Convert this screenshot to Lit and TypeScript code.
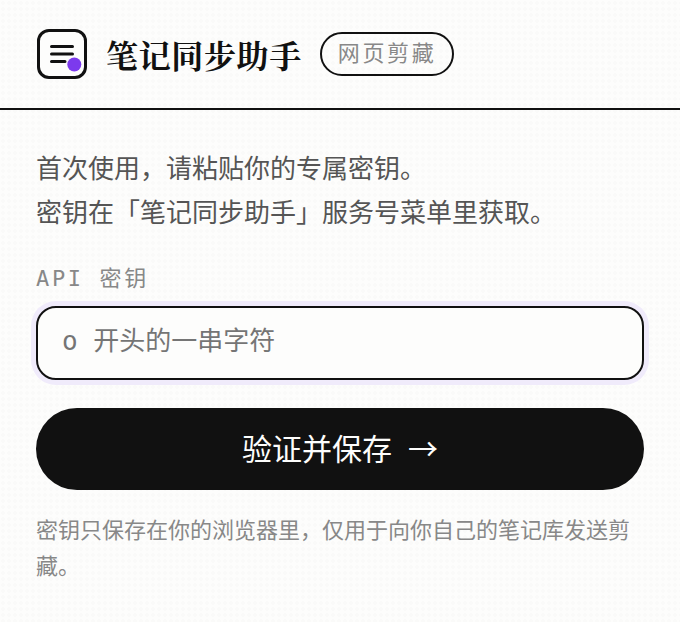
import { LitElement, html, css } from "lit";
import { customElement, state } from "lit/decorators.js";

@customElement("app-root")
export class AppRoot extends LitElement {
  @state() private key = "";

  static styles = css`
    :host {
      --ink: #111111;
      --paper: #fdfdfc;
      --muted: #888888;
      --sans: "Noto Sans CJK SC", sans-serif;
      --mono: "DejaVu Sans Mono", "Noto Sans CJK SC", monospace;
      display: block;
      min-height: 100vh;
      color: var(--ink);
      font-family: var(--sans);
      background-color: var(--paper);
      background-image: radial-gradient(circle, #fafaf9 2px, transparent 2px);
      background-size: 6px 6px;
    }
    .header {
      display: flex;
      align-items: center;
      gap: 18px;
      padding: 28px 36px;
      border-bottom: 2px solid var(--ink);
    }
    .logo {
      flex: none;
      width: 52px;
      height: 52px;
    }
    .title {
      margin: 0;
      font-family: "Noto Serif CJK SC", "Noto Serif SC", serif;
      font-size: 32px;
      font-weight: 700;
      line-height: 48px;
      letter-spacing: 0.02em;
      white-space: nowrap;
    }
    .badge {
      box-sizing: border-box;
      padding: 4px 16px;
      border: 2px solid var(--ink);
      border-radius: 22px;
      color: var(--muted);
      font-family: var(--mono);
      font-size: 22px;
      line-height: 32px;
      letter-spacing: 0.12em;
      white-space: nowrap;
    }
    .main {
      padding: 35px 36px 36px;
    }
    .intro {
      margin: 0 0 30px;
      color: #555555;
      font-size: 26px;
      line-height: 44px;
    }
    .form {
      display: flex;
      flex-direction: column;
    }
    .label {
      margin-bottom: 11px;
      color: var(--muted);
      font-family: var(--mono);
      font-size: 22px;
      line-height: 32px;
      letter-spacing: 0.12em;
    }
    .field {
      box-sizing: border-box;
      width: 100%;
      height: 74px;
      margin: 0 0 28px;
      padding: 0 24px 4px;
      border: 2px solid var(--ink);
      border-radius: 20px;
      outline: none;
      background: var(--paper);
      box-shadow: 0 0 0 5px #f0ebfb;
      color: var(--ink);
      font-family: var(--mono);
      font-size: 26px;
    }
    .field::placeholder {
      color: #757575;
    }
    .submit {
      display: flex;
      align-items: center;
      justify-content: center;
      gap: 16px;
      width: 100%;
      height: 82px;
      margin: 0;
      padding: 0 0 4px;
      border: 0;
      border-radius: 41px;
      background: var(--ink);
      color: var(--paper);
      font-family: var(--sans);
      font-size: 30px;
      cursor: pointer;
    }
    .note {
      margin: 20px 0 0;
      color: var(--muted);
      font-size: 22px;
      line-height: 36px;
    }
  `;

  private onInput(event: Event) {
    this.key = (event.target as HTMLInputElement).value;
  }

  private onSubmit(event: Event) {
    event.preventDefault();
  }

  render() {
    return html`
      <header class="header">
        <svg class="logo" viewBox="0 0 52 52" fill="none" aria-hidden="true">
          <rect x="2.5" y="2.5" width="47" height="47" rx="10.5" fill="#fdfdfc" stroke="#111" stroke-width="3" />
          <path d="M15.5 18.5H36.5M15.5 26H36.5M15.5 33.5H29" stroke="#111" stroke-width="3" stroke-linecap="round" />
          <circle cx="38.3" cy="36.5" r="7" fill="#7c3aed" />
        </svg>
        <h1 class="title">笔记同步助手</h1>
        <span class="badge">网页剪藏</span>
      </header>
      <main class="main">
        <p class="intro">首次使用，请粘贴你的专属密钥。<br />密钥在「笔记同步助手」服务号菜单里获取。</p>
        <form class="form" @submit=${this.onSubmit}>
          <label class="label" for="api-key">API 密钥</label>
          <input
            class="field"
            id="api-key"
            type="text"
            autocomplete="off"
            placeholder="o 开头的一串字符"
            .value=${this.key}
            @input=${this.onInput}
          />
          <button class="submit" type="submit"><span>验证并保存</span><span>→</span></button>
        </form>
        <p class="note">密钥只保存在你的浏览器里，仅用于向你自己的笔记库发送剪藏。</p>
      </main>
    `;
  }
}
